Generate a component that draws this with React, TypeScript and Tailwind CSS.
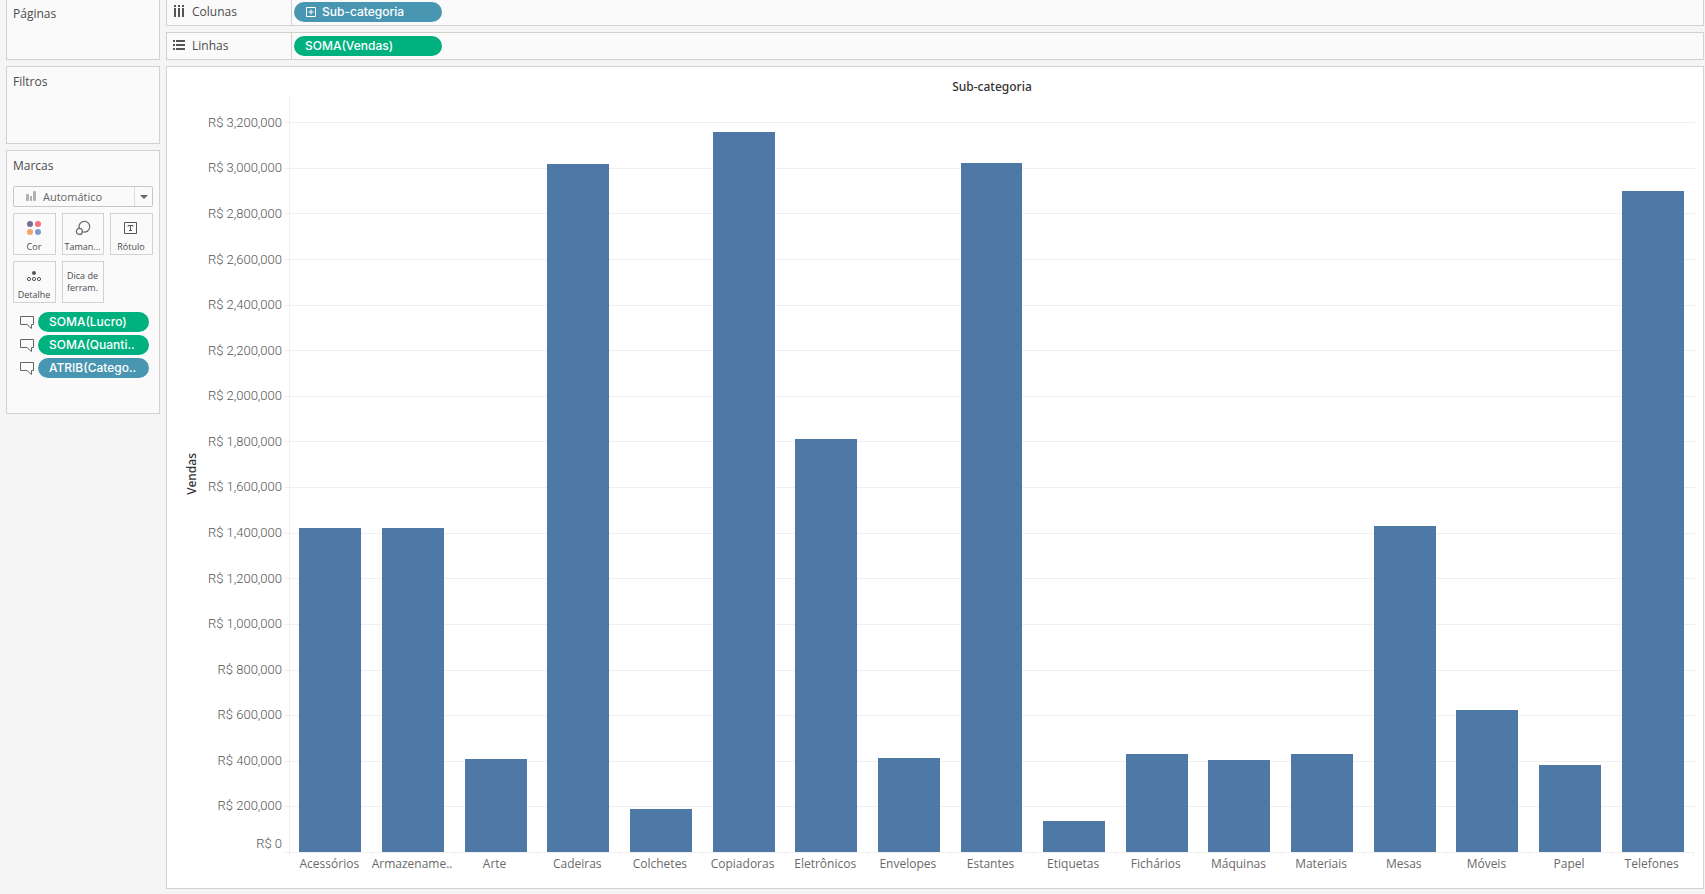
import clsx from "clsx";
import type { ReactNode } from "react";

const SALES = [
  { name: "Acessórios", value: 1420000 },
  { name: "Armazename..", value: 1420000 },
  { name: "Arte", value: 407000 },
  { name: "Cadeiras", value: 3016000 },
  { name: "Colchetes", value: 188000 },
  { name: "Copiadoras", value: 3157000 },
  { name: "Eletrônicos", value: 1811000 },
  { name: "Envelopes", value: 412000 },
  { name: "Estantes", value: 3020000 },
  { name: "Etiquetas", value: 136000 },
  { name: "Fichários", value: 429000 },
  { name: "Máquinas", value: 403000 },
  { name: "Materiais", value: 429000 },
  { name: "Mesas", value: 1429000 },
  { name: "Móveis", value: 622000 },
  { name: "Papel", value: 381000 },
  { name: "Telefones", value: 2898000 },
];

// The axis runs a little past its last labelled tick.
const AXIS_MAX = 3314000;
const TICKS = Array.from({ length: 16 }, (_, i) => (16 - i) * 200000);

export default function App() {
  return (
    <div className="flex min-h-screen gap-1.5 bg-[#f5f5f5] pr-px pb-[5px] pl-1.5 font-['Open_Sans',sans-serif] text-[12px] leading-4 text-[#4b4b4b]">
      <aside className="flex w-[154px] shrink-0 flex-col gap-1.5">
        <Card title="Páginas" className="h-[60px] border-t-0 pt-1.5" />
        <Card title="Filtros" className="h-[78px] pt-[7px]" />
        <MarksCard />
      </aside>
      <main className="flex min-w-0 flex-1 flex-col gap-1.5">
        <Shelf title="Colunas" icon={<ColumnsIcon />} className="h-[26px] border-t-0 *:pb-0.5">
          <Pill tone="dimension" className="w-[148px] pl-3">
            <PlusBoxIcon />
            Sub-categoria
          </Pill>
        </Shelf>
        <Shelf title="Linhas" icon={<RowsIcon />} className="h-7">
          <Pill tone="measure" className="w-[148px] pl-[11px]">
            SOMA(Vendas)
          </Pill>
        </Shelf>
        <SalesChart />
      </main>
    </div>
  );
}

function Card({ title, className, children }: { title: string; className?: string; children?: ReactNode }) {
  return (
    <section className={clsx("border border-[#d2d2d2] bg-[#fafafa] px-1.5", className)}>
      <h2>{title}</h2>
      {children}
    </section>
  );
}

function Shelf({ title, icon, className, children }: { title: string; icon: ReactNode; className?: string; children: ReactNode }) {
  return (
    <section className={clsx("flex items-stretch border border-[#d2d2d2] bg-[#fafafa]", className)}>
      <div className="flex w-[124px] items-center gap-1.5 pl-1.5">
        {icon}
        <h2>{title}</h2>
      </div>
      <div className="flex items-center border-l border-[#d2d2d2] pl-0.5">{children}</div>
    </section>
  );
}

function Pill({ tone, className, children }: { tone: "measure" | "dimension"; className?: string; children: ReactNode }) {
  return (
    <button
      type="button"
      className={clsx(
        "flex h-5 items-center rounded-full text-left font-['Inter',sans-serif] text-[12px] font-medium whitespace-nowrap text-white",
        tone === "measure" ? "bg-[#00b180]" : "bg-[#4996b2]",
        className,
      )}
    >
      {children}
    </button>
  );
}

function MarksCard() {
  return (
    <Card title="Marcas" className="h-[264px] pt-[7px]">
      {/* Mark type */}
      <button
        type="button"
        aria-haspopup="listbox"
        className="mt-3 flex h-[21px] w-full items-center rounded-xs border border-[#c8c8c8] pl-3 text-[11px] text-[#666]"
      >
        <BarsIcon />
        <span className="ml-1.5 flex-1 text-left">Automático</span>
        <span className="flex w-[18px] items-center justify-center self-stretch border-l border-[#dcdcdc]">
          <svg width="8" height="4" viewBox="0 0 8 4" aria-hidden>
            <path d="M0 0h8L4 4z" fill="#666" />
          </svg>
        </span>
      </button>

      <div className="mt-1.5 grid grid-cols-[43px_42px_43px] gap-1.5">
        <MarkButton label="Cor" icon={<ColorIcon />} />
        <MarkButton label="Taman..." icon={<SizeIcon />} />
        <MarkButton label="Rótulo" icon={<LabelIcon />} />
        <MarkButton label="Detalhe" icon={<DetailIcon />} />
        <MarkButton label="Dica de ferram." />
      </div>

      <ul className="mt-[9px] space-y-[3px] pr-1 pl-[7px]">
        <MarkField tone="measure" label="SOMA(Lucro)" />
        <MarkField tone="measure" label="SOMA(Quanti.." />
        <MarkField tone="dimension" label="ATRIB(Catego.." />
      </ul>
    </Card>
  );
}

function MarkButton({ label, icon }: { label: string; icon?: ReactNode }) {
  return (
    <button
      type="button"
      className="flex h-[42px] flex-col items-center justify-center border border-[#d2d2d2] pr-px text-[9px] leading-3"
    >
      {icon && <span className="flex h-[26px] items-center">{icon}</span>}
      {label}
    </button>
  );
}

function MarkField({ tone, label }: { tone: "measure" | "dimension"; label: string }) {
  return (
    <li className="flex items-center gap-1">
      <TooltipIcon />
      <Pill tone={tone} className="flex-1 pl-[11px]">
        {label}
      </Pill>
    </li>
  );
}

function SalesChart() {
  return (
    <section className="flex flex-1 flex-col border border-[#d2d2d2] bg-white pr-2 pb-4 pl-4 font-['Noto_Sans',sans-serif]">
      <h1 className="pt-3 pb-px pl-[106px] text-center font-medium text-[#333]">Sub-categoria</h1>
      <div className="flex flex-1">
        <div className="flex w-[17px] items-center justify-center">
          <span className="rotate-180 font-medium text-[#333] [writing-mode:vertical-rl]">Vendas</span>
        </div>

        {/* Each label is centred on its tick; zero sits just above the baseline. */}
        <div className="flex w-[82px] flex-col pt-1 text-right font-['Roboto',sans-serif] text-[13px] font-light text-[#555]">
          {TICKS.map((t) => (
            <div key={t} className="flex flex-2 items-center justify-end">
              R$ {t.toLocaleString("en-US")}
            </div>
          ))}
          <div className="flex flex-1 items-end justify-end">R$ 0</div>
        </div>

        <div className="relative ml-0.5 flex-1 pr-px pl-[5px]">
          <div className="absolute inset-0 flex flex-col pt-[26px]" aria-hidden>
            {TICKS.map((t) => (
              <div key={t} className="flex-1 border-t border-[#f0f0f0]" />
            ))}
          </div>
          <div className="relative grid h-full grid-cols-17 items-end before:absolute before:inset-y-0 before:left-0 before:w-px before:bg-[#f0f0f0]">
            {SALES.map((s) => (
              <div
                key={s.name}
                className="mx-auto w-3/4 bg-[#4e79a7]"
                style={{ height: `${(s.value / AXIS_MAX) * 100}%` }}
              />
            ))}
          </div>
        </div>
      </div>

      <div className="ml-[101px] border-t border-[#f0f0f0] pr-px pl-[5px]">
        <div className="grid grid-cols-17 text-center font-['Open_Sans',sans-serif] text-[#6a6a6a]">
          {SALES.map((s) => (
            <div key={s.name} className="group min-w-0">
              <div className="h-[3px] border-l border-[#f0f0f0] group-last:border-r" />
              <div className="pr-0.5 whitespace-nowrap">{s.name}</div>
            </div>
          ))}
        </div>
      </div>
    </section>
  );
}

function ColumnsIcon() {
  return (
    <svg width="13" height="13" viewBox="0 0 13 13" fill="#555" aria-hidden>
      <path d="M1 0h2v2H1zM5 0h2v2H5zM9 0h2v2H9zM1 3h2v9H1zM5 3h2v9H5zM9 3h2v9H9z" />
    </svg>
  );
}

function RowsIcon() {
  return (
    <svg width="13" height="12" viewBox="0 0 13 12" fill="#555" aria-hidden>
      <path d="M0 0h2v2H0zM3 0h9v2H3zM0 4h2v2H0zM3 4h9v2H3zM0 8h2v2H0zM3 8h9v2H3z" />
    </svg>
  );
}

function PlusBoxIcon() {
  return (
    <svg className="mr-1.5" width="10" height="10" viewBox="0 0 10 10" fill="none" stroke="#fff" aria-hidden>
      <path d="M.5.5h9v9h-9zM5 2.5v5M2.5 5h5" />
    </svg>
  );
}

function BarsIcon() {
  return (
    <svg width="11" height="11" viewBox="0 0 11 11" fill="#b0b0b0" aria-hidden>
      <rect x="0" y="3" width="3" height="7" rx="1" />
      <rect x="4" y="5" width="2" height="5" />
      <rect x="7" y="0" width="3" height="10" rx="1" />
    </svg>
  );
}

function ColorIcon() {
  return (
    <svg width="16" height="16" viewBox="0 0 16 16" aria-hidden>
      <circle cx="4" cy="4" r="3" fill="#7b6a94" />
      <circle cx="12" cy="4" r="3" fill="#f8707c" />
      <circle cx="4" cy="12" r="3" fill="#f2a66a" />
      <circle cx="12" cy="12" r="3" fill="#7b9dcb" />
    </svg>
  );
}

function SizeIcon() {
  return (
    <svg width="16" height="16" viewBox="0 0 16 16" fill="none" stroke="#666" strokeWidth="1.2" aria-hidden>
      <path d="M4.2 8.2a5.4 5.4 0 1 1 3.2 3.5" />
      <circle cx="4.4" cy="11.4" r="3" />
    </svg>
  );
}

function LabelIcon() {
  return (
    <svg width="14" height="12" viewBox="0 0 14 12" fill="none" stroke="#555" aria-hidden>
      <path d="M.5.5h12v11H.5zM4 4.5v-1h5v1M6.5 3.5v5M5 8.5h3" />
    </svg>
  );
}

function DetailIcon() {
  return (
    <svg width="16" height="12" viewBox="0 0 16 12" fill="none" stroke="#555" aria-hidden>
      <circle cx="8" cy="3" r="2" fill="#555" stroke="none" />
      <circle cx="3" cy="9" r="1.6" />
      <circle cx="8" cy="9" r="1.6" />
      <circle cx="13" cy="9" r="1.6" />
    </svg>
  );
}

function TooltipIcon() {
  return (
    <svg width="14" height="13" viewBox="0 0 14 13" fill="none" stroke="#666" aria-hidden>
      <path d="M.5.5h13v8h-2v4l-4.5-4H.5z" />
    </svg>
  );
}
